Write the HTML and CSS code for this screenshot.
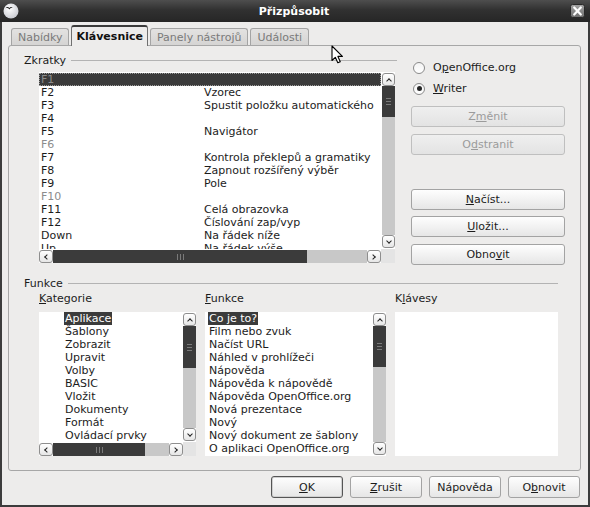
FILE: index.html
```html
<!DOCTYPE html>
<html>
<head>
    <title>Přizpůsobit</title>
    <link rel="stylesheet" href="styles.css">
</head>
<body>
    <div class="window">
        <div class="titlebar">
            <div class="app-icon">
                <svg width="16" height="16" viewBox="0 0 16 16">
                    <defs>
                        <radialGradient id="orb" cx="0.4" cy="0.35" r="0.7">
                            <stop offset="0" stop-color="#ffffff"/>
                            <stop offset="1" stop-color="#c9cbd2"/>
                        </radialGradient>
                    </defs>
                    <circle cx="8" cy="8" r="7.5" fill="url(#orb)"/>
                    <path d="M2.5 5.2 C4 3.6 5.4 3.8 6.3 5 C7.2 3.9 8.6 3.7 9.8 4.6 C8.4 4.6 7.4 5.3 6.4 6.4 C5.4 5.2 4.2 4.8 2.5 5.2 Z" fill="#1d1d1d"/>
                </svg>
            </div>
            <div class="title">Přizpůsobit</div>
            <div class="close">
                <svg width="15" height="14" viewBox="0 0 15 14">
                    <defs>
                        <linearGradient id="cls" x1="0" y1="0" x2="0" y2="1">
                            <stop offset="0" stop-color="#a3a3a3"/>
                            <stop offset="1" stop-color="#707070"/>
                        </linearGradient>
                    </defs>
                    <rect x="0.5" y="0.5" width="14" height="13" rx="2" fill="url(#cls)" stroke="#2a2a2a"/>
                    <path d="M4.2 3.5 L10.8 10.5 M10.8 3.5 L4.2 10.5" stroke="#ffffff" stroke-width="2.2" stroke-linecap="round"/>
                </svg>
            </div>
        </div>

        <div class="client">
            <div class="tabs">
                <div class="tab">Nabídky</div>
                <div class="tab active">Klávesnice</div>
                <div class="tab">Panely nástrojů</div>
                <div class="tab">Události</div>
            </div>

            <div class="panel">
                <div class="top">
                    <div class="shortcuts">
                        <div class="section-head">Zkratky</div>
                        <div class="list-box keys-list">
                            <div class="rows">
                                <div class="row sel dim"><span>F1</span><span></span></div>
                                <div class="row"><span>F2</span><span>Vzorec</span></div>
                                <div class="row"><span>F3</span><span>Spustit položku automatického</span></div>
                                <div class="row"><span>F4</span><span></span></div>
                                <div class="row"><span>F5</span><span>Navigátor</span></div>
                                <div class="row dim"><span>F6</span><span></span></div>
                                <div class="row"><span>F7</span><span>Kontrola překlepů a gramatiky</span></div>
                                <div class="row"><span>F8</span><span>Zapnout rozšířený výběr</span></div>
                                <div class="row"><span>F9</span><span>Pole</span></div>
                                <div class="row dim"><span>F10</span><span></span></div>
                                <div class="row"><span>F11</span><span>Celá obrazovka</span></div>
                                <div class="row"><span>F12</span><span>Číslování zap/vyp</span></div>
                                <div class="row"><span>Down</span><span>Na řádek níže</span></div>
                                <div class="row"><span>Up</span><span>Na řádek výše</span></div>
                            </div>
                            <div class="vscroll">
                                <div class="sb-btn"><i class="chev up"></i></div>
                                <div class="thumb-v" style="height: 31px"><i class="grip-v"></i></div>
                                <div class="track"></div>
                                <div class="sb-btn"><i class="chev down"></i></div>
                            </div>
                            <div class="hscroll">
                                <div class="sb-btn"><i class="chev left"></i></div>
                                <div class="thumb-h" style="width: 254px"><i class="grip-h"></i></div>
                                <div class="track"></div>
                                <div class="sb-btn"><i class="chev right"></i></div>
                            </div>
                            <div class="corner"></div>
                        </div>
                    </div>

                    <div class="side">
                        <div class="radio"><span class="radio-dot"></span><span>O<u>p</u>enOffice.org</span></div>
                        <div class="radio"><span class="radio-dot on"></span><span><u>W</u>riter</span></div>
                        <button class="btn gap-s" disabled>Z<u>m</u>ěnit</button>
                        <button class="btn gap-s" disabled>O<u>d</u>stranit</button>
                        <button class="btn gap-l"><u>N</u>ačíst...</button>
                        <button class="btn gap-xs"><u>U</u>ložit...</button>
                        <button class="btn gap-s">Obno<u>v</u>it</button>
                    </div>
                </div>

                <div class="functions">
                    <div class="section-head">Funkce</div>
                    <div class="func-grid">
                        <div class="col-label"><u>K</u>ategorie</div>
                        <div class="col-label"><u>F</u>unkce</div>
                        <div class="col-label">K<u>l</u>ávesy</div>

                        <div class="list-box cat-list">
                            <div class="items indent">
                                <div class="item"><span class="hl">Aplikace</span></div>
                                <div class="item">Šablony</div>
                                <div class="item">Zobrazit</div>
                                <div class="item">Upravit</div>
                                <div class="item">Volby</div>
                                <div class="item">BASIC</div>
                                <div class="item">Vložit</div>
                                <div class="item">Dokumenty</div>
                                <div class="item">Formát</div>
                                <div class="item">Ovládací prvky</div>
                            </div>
                            <div class="vscroll">
                                <div class="sb-btn"><i class="chev up"></i></div>
                                <div class="thumb-v" style="height: 42px"><i class="grip-v"></i></div>
                                <div class="track"></div>
                                <div class="sb-btn"><i class="chev down"></i></div>
                            </div>
                            <div class="hscroll">
                                <div class="sb-btn"><i class="chev left"></i></div>
                                <div class="thumb-h" style="width: 92px"><i class="grip-h"></i></div>
                                <div class="track"></div>
                                <div class="sb-btn"><i class="chev right"></i></div>
                            </div>
                            <div class="corner"></div>
                        </div>

                        <div class="list-box func-list">
                            <div class="items">
                                <div class="item"><span class="hl">Co je to?</span></div>
                                <div class="item">Film nebo zvuk</div>
                                <div class="item">Načíst URL</div>
                                <div class="item">Náhled v prohlížeči</div>
                                <div class="item">Nápověda</div>
                                <div class="item">Nápověda k nápovědě</div>
                                <div class="item">Nápověda OpenOffice.org</div>
                                <div class="item">Nová prezentace</div>
                                <div class="item">Nový</div>
                                <div class="item">Nový dokument ze šablony</div>
                                <div class="item">O aplikaci OpenOffice.org</div>
                            </div>
                            <div class="vscroll">
                                <div class="sb-btn"><i class="chev up"></i></div>
                                <div class="thumb-v" style="height: 41px"><i class="grip-v"></i></div>
                                <div class="track"></div>
                                <div class="sb-btn"><i class="chev down"></i></div>
                            </div>
                        </div>

                        <div class="list-box bind-list"></div>
                    </div>
                </div>
            </div>

            <div class="actions">
                <button class="btn default"><u>O</u>K</button>
                <button class="btn"><u>Z</u>rušit</button>
                <button class="btn">Nápověda</button>
                <button class="btn">O<u>b</u>novit</button>
            </div>
        </div>

        <!-- mouse pointer as seen in the capture -->
        <svg class="pointer" width="13" height="19" viewBox="0 0 13 19">
            <path d="M1 1 L1 15.5 L4.3 12.3 L6.8 17.8 L9.3 16.7 L6.9 11.4 L11.4 11.4 Z" fill="#ffffff" stroke="#000000" stroke-width="1.1" stroke-linejoin="round"/>
        </svg>
    </div>
</body>
</html>
```

FILE: styles.css
```css
:root {
    --window-bg: #edeceb;
    --frame: #3c3c3c;
    --text-color: #1c1c1c;
    --dim-text: #8c8c8c;
    --border-color: #a7a7a7;
    --select-bg: #3b3b3b;
    --track: #c8c8c8;
}

body {
    margin: 0;
    font-family: "DejaVu Sans", "Noto Sans", sans-serif;
    font-size: 11px;
    color: var(--text-color);
    background: var(--window-bg);
}

.window {
    position: relative;
    width: 590px;
    height: 507px;
    display: flex;
    flex-direction: column;
}

/* title bar */
.titlebar {
    height: 22px;
    flex-shrink: 0;
    display: grid;
    grid-template-columns: 1fr auto 1fr;
    align-items: center;
    padding: 0 5px 0 3px;
    background: linear-gradient(#4e4e4e, #313131 45%, #262626);
    color: #fff;
}

.app-icon {
    display: flex;
}

.title {
    font-weight: bold;
    font-size: 11px;
}

.close {
    justify-self: end;
    display: flex;
}

/* dialog body */
.client {
    flex: 1;
    display: flex;
    flex-direction: column;
    background: var(--window-bg);
    border: 2px solid var(--frame);
    border-top: 0;
    padding: 3px 7px 7px 6px;
}

.tabs {
    height: 20px;
    display: flex;
    align-items: flex-end;
    gap: 2px;
    padding-left: 3px;
    position: relative;
    z-index: 1;
}

.tab {
    height: 17px;
    box-sizing: border-box;
    padding: 0 6px;
    display: flex;
    align-items: center;
    border: 1px solid #a4a4a4;
    border-bottom: 0;
    border-radius: 3px 3px 0 0;
    background: linear-gradient(#e3e2e1, #d5d4d3);
    color: #7a7a7a;
}

.tab.active {
    height: 21px;
    margin-bottom: -1px;
    padding: 0 4px;
    background: var(--window-bg);
    color: #111;
    font-weight: bold;
    border-color: #707070;
    border-top: 2px solid #3a3a3a;
}

.panel {
    flex: 1;
    display: flex;
    flex-direction: column;
    border: 1px solid var(--border-color);
    border-radius: 3px;
    padding: 8px 15px 0 15px;
}

.top {
    display: flex;
    gap: 14px;
}

.shortcuts {
    width: 373px;
    display: flex;
    flex-direction: column;
}

.section-head {
    display: flex;
    align-items: center;
    gap: 5px;
    line-height: 13px;
}

.section-head::after {
    content: "";
    flex: 1;
    border-top: 1px solid #b3b3b3;
}

/* list boxes */
.list-box {
    background: #fff;
    display: grid;
    overflow: hidden;
}

.keys-list {
    width: 356px;
    height: 191px;
    margin: 5px 0 0 15px;
    grid-template-columns: 1fr 14px;
    grid-template-rows: 1fr 14px;
}

.rows {
    overflow: hidden;
    padding-top: 1px;
}

.row {
    display: grid;
    grid-template-columns: 163px 1fr;
    height: 13px;
    line-height: 13px;
    padding-left: 2px;
    white-space: nowrap;
}

.row.dim {
    color: var(--dim-text);
}

.row.sel {
    background: var(--select-bg);
    outline: 1px dotted #9c9c9c;
    outline-offset: -1px;
}

/* scroll bars */
.vscroll {
    display: flex;
    flex-direction: column;
    padding: 1px 0 1px 1px;
}

.hscroll {
    display: flex;
    padding-top: 1px;
}

.sb-btn {
    width: 13px;
    height: 13px;
    flex-shrink: 0;
    box-sizing: border-box;
    border: 1px solid #8e8e8e;
    border-radius: 3px;
    background: linear-gradient(#ffffff, #e6e6e6);
    display: flex;
    align-items: center;
    justify-content: center;
}

.hscroll .sb-btn {
    width: 14px;
}

.track {
    flex: 1;
    background: var(--track);
}

.thumb-v,
.thumb-h {
    flex-shrink: 0;
    background: #3b3b3b;
    display: flex;
    align-items: center;
    justify-content: center;
}

.grip-v {
    width: 5px;
    height: 7px;
    background: repeating-linear-gradient(#7a7a7a 0 1px, transparent 1px 3px);
}

.grip-h {
    width: 7px;
    height: 6px;
    background: repeating-linear-gradient(90deg, #7a7a7a 0 1px, transparent 1px 3px);
}

.corner {
    background: #e4e4e4;
}

.chev {
    width: 3px;
    height: 3px;
    border-left: 1.5px solid #222;
    border-top: 1.5px solid #222;
}

.chev.up { transform: translateY(1px) rotate(45deg); }
.chev.down { transform: translateY(-1px) rotate(225deg); }
.chev.left { transform: translateX(1px) rotate(-45deg); }
.chev.right { transform: translateX(-1px) rotate(135deg); }

/* right column */
.side {
    width: 154px;
    padding-top: 3px;
    display: flex;
    flex-direction: column;
}

.radio {
    height: 21px;
    display: flex;
    align-items: center;
    gap: 8px;
    padding-left: 2px;
}

.radio-dot {
    width: 12px;
    height: 12px;
    box-sizing: border-box;
    border: 1px solid #8a8a8a;
    border-radius: 50%;
    background: linear-gradient(#f4f4f4, #ffffff);
    display: flex;
    align-items: center;
    justify-content: center;
}

.radio-dot.on::after {
    content: "";
    width: 5px;
    height: 5px;
    border-radius: 50%;
    background: #262626;
}

.btn {
    height: 21px;
    box-sizing: border-box;
    padding: 0;
    border: 1px solid #a3a3a3;
    border-radius: 3px;
    background: linear-gradient(#fefefe, #e6e6e6);
    font-family: inherit;
    font-size: 11px;
    color: var(--text-color);
    display: flex;
    align-items: center;
    justify-content: center;
}

.btn:disabled {
    background: linear-gradient(#efefef, #e3e3e3);
    border-color: #bfbfbf;
    color: #9b9b9b;
}

.gap-xs { margin-top: 6px; }
.gap-s { margin-top: 7px; }
.gap-l { margin-top: 34px; }

/* lower section */
.functions {
    margin-top: 12px;
    margin-right: 7px;
}

.func-grid {
    display: grid;
    grid-template-columns: 157px 181px 1fr;
    grid-template-rows: 13px 144px;
    column-gap: 9px;
    row-gap: 7px;
    margin: 2px 0 0 15px;
}

.col-label {
    line-height: 13px;
}

.cat-list {
    grid-template-columns: 1fr 13px;
    grid-template-rows: 1fr 14px;
}

.cat-list .vscroll {
    padding-left: 0;
}

.func-list {
    grid-template-columns: 1fr 14px;
}

.items {
    overflow: hidden;
    padding-left: 4px;
}

.items.indent {
    padding-left: 26px;
}

.item {
    height: 13px;
    line-height: 13px;
    white-space: nowrap;
}

.hl {
    background: var(--select-bg);
    color: #fff;
    padding: 0 1px;
    margin-left: -1px;
}

/* dialog buttons */
.actions {
    display: flex;
    justify-content: flex-end;
    gap: 7px;
    margin-top: 5px;
    padding-right: 1px;
}

.actions .btn {
    width: 72px;
    height: 22px;
}

.actions .btn.default {
    border-color: #555;
    box-shadow: inset 0 0 0 1px #d0d0d0;
}

.pointer {
    position: absolute;
    left: 331px;
    top: 45px;
}
```
